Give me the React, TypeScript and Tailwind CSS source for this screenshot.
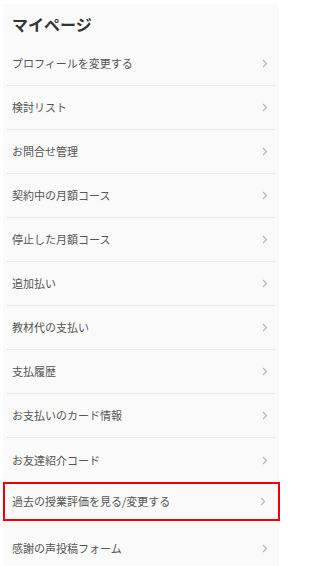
import React from "react";

const items = [
  "プロフィールを変更する",
  "検討リスト",
  "お問合せ管理",
  "契約中の月額コース",
  "停止した月額コース",
  "追加払い",
  "教材代の支払い",
  "支払履歴",
  "お支払いのカード情報",
  "お友達紹介コード",
  "過去の授業評価を見る/変更する",
  "感謝の声投稿フォーム",
];

function Chevron() {
  return (
    <svg width="6" height="9" viewBox="0 0 6 9" className="shrink-0">
      <path d="M1 1 L4.5 4.5 L1 8" fill="none" stroke="#b8b8b8" strokeWidth="1.2" />
    </svg>
  );
}

export default function App() {
  return (
    <div
      className="w-[296px] h-[566px] overflow-hidden bg-white"
      style={{ fontFamily: '"Noto Sans CJK JP", "Noto Sans", sans-serif' }}
    >
      <div className="ml-[3px] mr-[17px] mt-[4px] bg-[#fafafa] h-[600px]">
        <div className="h-[38px] flex items-center pl-[9px] pt-[1px]">
          <h1 className="text-[16px] font-bold text-[#333] leading-none">マイページ</h1>
        </div>
        <ul className="px-[3px]">
          {items.map((t, i) =>
            i === 10 ? (
              <li key={t} className="h-[44px] -mx-[3px] -mr-[4px]">
                <div className="h-[39px] border-2 border-[#e00] flex items-center justify-between pl-[7px] pr-[12px]">
                  <span className="text-[11px] text-[#555]">{t}</span>
                  <Chevron />
                </div>
              </li>
            ) : (
              <li
                key={t}
                className={`h-[44px] flex items-center justify-between pl-[6px] pr-[8px] ${
                  i === 9 || i === 11 ? "" : "border-b border-[#ececec]"
                }`}
              >
                <span className="text-[11px] text-[#555]">{t}</span>
                <Chevron />
              </li>
            )
          )}
        </ul>
      </div>
    </div>
  );
}
